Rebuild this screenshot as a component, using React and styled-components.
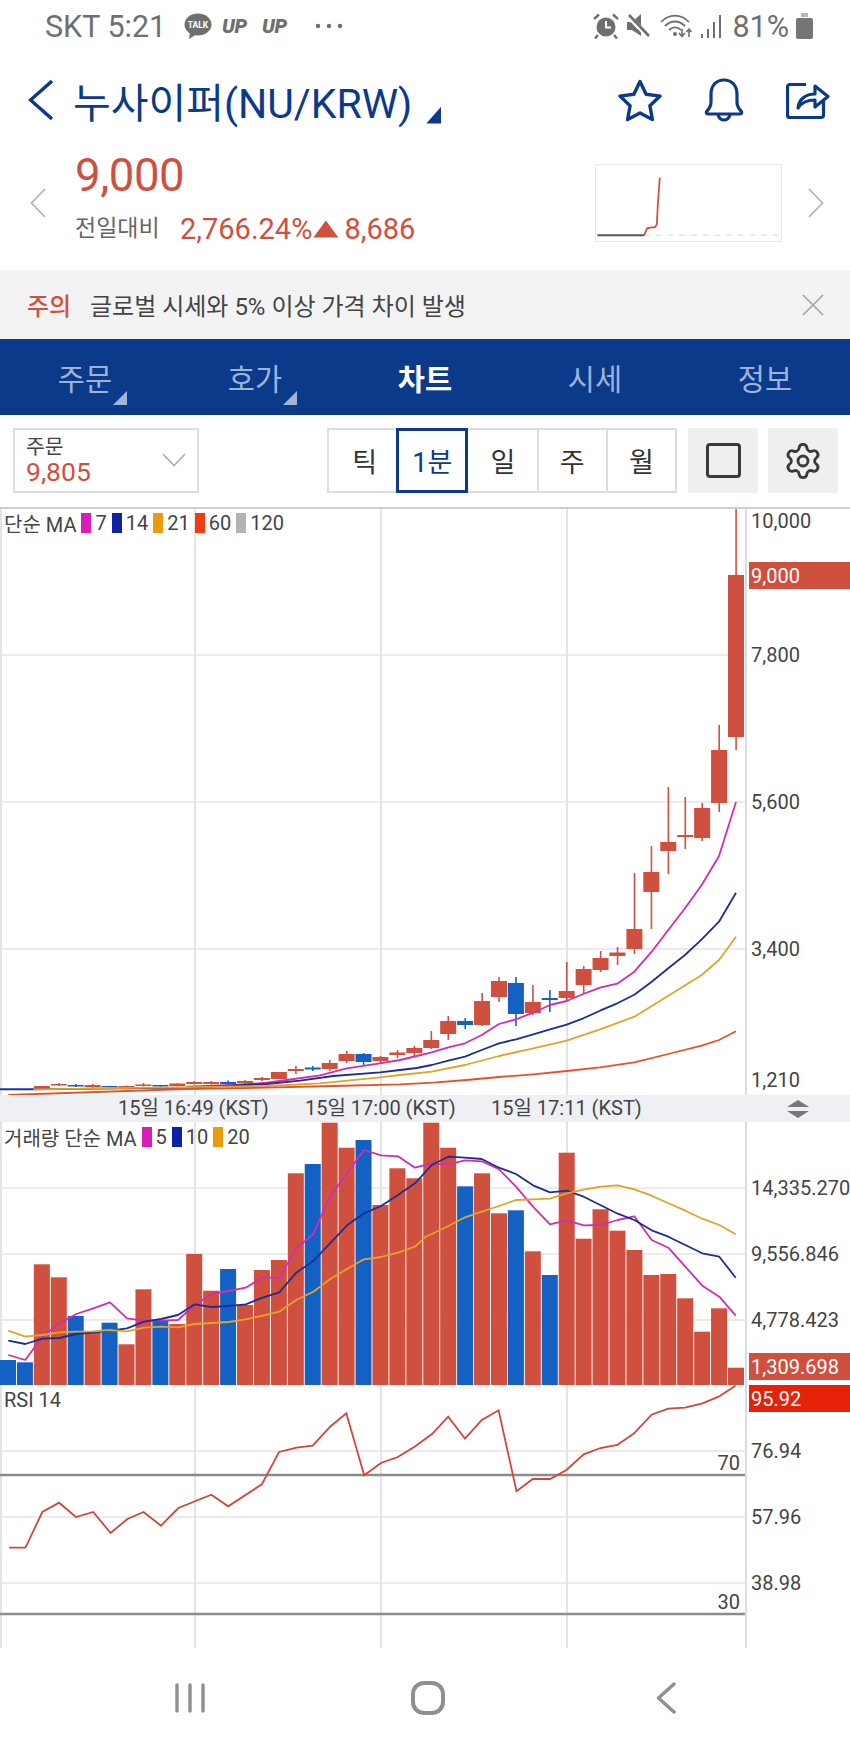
import React from 'react';
import styled, { createGlobalStyle } from 'styled-components';
import { Settings } from 'lucide-react';

const RED = '#d0503f';
const BLUE = '#1461c4';
const NAVY = '#0c3a8b';
const STEP = 16.93;

// chart series are kept at 3x resolution from an origin, so plain integers are enough
const scale3 = (ox, oy, list) => list.map(([x, y]) => [ox + x / 3, oy + y / 3]);
const toPoints = (list) => list.map(([x, y]) => `${x.toFixed(1)},${y.toFixed(1)}`).join(' ');

// i, body top, body bottom, wick top, wick bottom, falling
const CANDLES = [
  [2, 1086, 1089, 1086, 1089], [3, 1084, 1085.5, 1083, 1086], [4, 1085, 1086.5, 1084, 1087, 1],
  [5, 1085, 1087, 1084, 1087.5], [6, 1086, 1087, 1086, 1087.5, 1], [7, 1086, 1087, 1085.5, 1087.5],
  [8, 1084.5, 1086, 1083, 1086.5], [9, 1085, 1086.5, 1085, 1087, 1], [10, 1083.5, 1086, 1083, 1086.5],
  [11, 1082, 1084, 1081, 1084.5], [12, 1082, 1084, 1081, 1084.5], [13, 1082, 1084, 1080.5, 1084.5, 1],
  [14, 1081, 1083, 1080, 1084], [15, 1078, 1080, 1077, 1081], [16, 1072, 1079, 1072, 1079],
  [17, 1069, 1071, 1066, 1074], [18, 1067.5, 1069.5, 1066, 1071, 1], [19, 1063, 1069, 1060, 1071],
  [20, 1054, 1061, 1051, 1063], [21, 1054, 1062, 1053, 1065, 1], [22, 1057, 1061, 1056, 1063],
  [23, 1052.5, 1055, 1050, 1058], [24, 1048, 1053, 1046, 1057], [25, 1040, 1048, 1031, 1049],
  [26, 1021, 1034, 1016, 1040], [27, 1021, 1025, 1018, 1029, 1], [28, 1001, 1025, 993, 1026],
  [29, 981, 997, 977, 1002], [30, 983, 1014, 977, 1026, 1], [31, 1002, 1013, 985, 1015],
  [32, 998, 1000, 990, 1012, 1], [33, 991, 998, 962, 1000], [34, 969, 985, 966, 993],
  [35, 958, 970, 951, 972], [36, 952.5, 956, 947, 965], [37, 929, 949, 873, 954],
  [38, 872, 892, 846, 929], [39, 842, 851, 787, 874], [40, 835, 837, 797, 849],
  [41, 808, 838, 803, 841], [42, 750, 803, 725, 812], [43, 575, 737, 509, 750],
];

const PRICE_MA = [
  {
    color: '#d22cb4',
    points: [
      ...scale3(0, 960, [[560, 380], [700, 375], [800, 368], [860, 360], [960, 346], [1040, 325], [1140, 310]]),
      ...scale3(400, 820, [[0, 720], [50, 708], [95, 697], [145, 682], [195, 670], [245, 645], [297, 612], [348, 598], [400, 578], [450, 555], [500, 543], [550, 522], [600, 503], [652, 491], [703, 455], [755, 395], [805, 330], [855, 265], [905, 195], [957, 108], [1008, -54]]),
    ],
  },
  {
    color: '#1c2f90',
    points: [
      ...scale3(0, 960, [[0, 388], [100, 388], [560, 383], [800, 372], [900, 362], [1000, 348], [1140, 337]]),
      ...scale3(400, 820, [[0, 750], [50, 744], [95, 735], [145, 722], [195, 710], [245, 690], [297, 670], [348, 658], [400, 643], [450, 628], [500, 614], [550, 595], [600, 572], [652, 550], [703, 524], [755, 485], [805, 445], [855, 405], [905, 358], [957, 305], [1008, 218]]),
    ],
  },
  {
    color: '#e3a32a',
    points: [
      ...scale3(0, 960, [[100, 388], [800, 378], [960, 370], [1140, 352]]),
      ...scale3(400, 820, [[0, 765], [95, 755], [195, 735], [297, 708], [400, 685], [500, 662], [600, 628], [703, 590], [805, 527], [905, 465], [957, 420], [1008, 350]]),
    ],
  },
  {
    color: '#e9502a',
    points: [
      ...scale3(0, 960, [[25, 405], [560, 387], [800, 383], [1000, 378]]),
      ...scale3(400, 820, [[0, 793], [100, 788], [200, 780], [297, 771], [400, 763], [500, 753], [600, 742], [703, 727], [805, 702], [905, 677], [957, 660], [1008, 634]]),
    ],
  },
];

// top of each volume bar, and which ones fell
const VOLUME = [1360, 1362.3, 1264.3, 1277.3, 1316, 1331.7, 1322.7, 1344.3, 1289.3, 1321, 1324, 1254, 1290.7, 1269, 1305, 1270, 1260, 1173.3, 1164, 1122.7, 1147.7, 1140, 1205, 1168.3, 1178.3, 1122.7, 1147.7, 1186.3, 1173.3, 1213.3, 1210.3, 1251.3, 1275, 1152.7, 1238.7, 1209.3, 1230.7, 1250, 1275, 1274, 1298.3, 1331.7, 1308.3, 1367.7];
const VOLUME_DOWN = [0, 1, 4, 6, 9, 13, 18, 21, 27, 30, 32];

const VOLUME_MA = [
  {
    color: '#d22cb4',
    points: [
      ...scale3(0, 1120, [[25, 705], [76, 720], [127, 650], [178, 610], [229, 582], [280, 565], [330, 547], [381, 595], [432, 602], [483, 602], [534, 600], [584, 555], [635, 522], [686, 513], [737, 503], [788, 472], [838, 474], [889, 385], [940, 342], [990, 230], [1041, 160], [1092, 90], [1143, 106], [1194, 109], [1245, 143]]),
      ...scale3(425, 1120, [[20, 130], [70, 133], [120, 121], [170, 124], [222, 148], [273, 200], [324, 260], [375, 313], [425, 301], [476, 316], [527, 315], [578, 300], [628, 289], [680, 360], [730, 383], [781, 440], [832, 497], [883, 530], [932, 587]]),
    ],
  },
  {
    color: '#1c2f90',
    points: [
      ...scale3(0, 1120, [[25, 662], [76, 672], [127, 656], [178, 654], [229, 642], [280, 638], [330, 632], [381, 625], [432, 605], [483, 597], [534, 585], [584, 553], [635, 561], [686, 558], [737, 553], [788, 533], [838, 517], [889, 458], [940, 423], [990, 370], [1041, 316], [1092, 280], [1143, 258], [1194, 225], [1245, 190]]),
      ...scale3(425, 1120, [[20, 135], [70, 110], [120, 113], [170, 117], [222, 143], [273, 162], [324, 196], [375, 217], [425, 212], [476, 230], [527, 256], [578, 281], [628, 300], [680, 331], [730, 350], [781, 375], [832, 400], [883, 410], [932, 473]]),
    ],
  },
  {
    color: '#e3a32a',
    points: [
      ...scale3(0, 1120, [[25, 632], [76, 650], [127, 645], [178, 637], [229, 635], [280, 634], [330, 630], [381, 634], [432, 623], [483, 620], [534, 622], [584, 612], [635, 609], [686, 606], [737, 598], [788, 587], [838, 575], [889, 540], [940, 515], [990, 478], [1041, 447], [1092, 418], [1143, 411], [1194, 398], [1245, 380]]),
      ...scale3(425, 1120, [[0, 352], [70, 318], [120, 292], [170, 275], [222, 258], [273, 240], [324, 238], [375, 236], [425, 220], [476, 209], [527, 200], [578, 196], [628, 208], [680, 227], [730, 250], [781, 272], [832, 296], [883, 315], [932, 343]]),
    ],
  },
];

const RSI = [[17, 503], [47, 503], [78, 396], [109, 368], [140, 411], [172, 396], [204, 459], [235, 417], [265, 396], [297, 437], [329, 384], [390, 344], [421, 379], [483, 313], [515, 216], [547, 203], [577, 197], [609, 140], [639, 100], [672, 286], [703, 249], [734, 231], [765, 200], [797, 162], [827, 110], [858, 176], [889, 120], [920, 91], [953, 334], [983, 297], [1015, 297], [1045, 270], [1077, 223], [1108, 204], [1139, 195], [1170, 160], [1202, 104], [1233, 86], [1264, 83], [1296, 70], [1326, 50], [1357, 17]]
  .map(([x, y]) => [x / 1.845, 1380 + y / 3]);

const GlobalStyle = createGlobalStyle`
  html, body {
    margin: 0;
    padding: 0;
    background: #fff;
    font-family: Roboto, "Noto Sans CJK KR", sans-serif;
  }
  * { box-sizing: border-box; }
`;

const Page = styled.div`
  width: 850px;
  height: 1748px;
  display: flex;
  flex-direction: column;
  background: #fff;
  overflow: hidden;
`;

/* status bar */
const StatusBar = styled.div`
  height: 50px;
  padding: 2px 37px 0 45px;
  display: flex;
  align-items: center;
  justify-content: space-between;
  color: #6f6f6f;
  font-size: 30.5px;
`;

const StatusGroup = styled.div`
  display: flex;
  align-items: center;
`;

const Carrier = styled.span`
  width: 120px;
  margin-right: 19px;
  white-space: nowrap;
`;

const UpBadge = styled.span`
  width: 30px;
  margin-right: 10px;
  font-size: 20px;
  font-weight: 900;
  font-style: italic;
  line-height: 1;
  letter-spacing: -0.5px;
`;

const Battery = styled.span`
  margin-left: 7px;
`;

const StatusIcon = styled.svg`
  display: block;
  flex: none;
  margin-right: ${(p) => p.$gap || 0}px;
  margin-left: ${(p) => p.$lead || 0}px;
`;

/* title */
const TitleRow = styled.div`
  height: 100px;
  padding: 0 20px 0 28px;
  display: flex;
  align-items: center;
  color: ${NAVY};
`;

const Title = styled.h1`
  margin: 0 0 0 20px;
  font-size: 41px;
  font-weight: 400;
  white-space: nowrap;
`;

const TitleCaret = styled.span`
  width: 15px;
  height: 17px;
  margin: 30px 0 0 14px;
  background: ${NAVY};
  clip-path: polygon(100% 0, 100% 100%, 0 100%);
`;

const TitleActions = styled.div`
  margin-left: auto;
  display: flex;
  align-items: center;
  gap: 42px;
`;

/* price summary */
const PriceRow = styled.div`
  height: 120px;
  padding: 14px 26px 28px 30px;
  display: flex;
  align-items: center;
`;

const PriceInfo = styled.div`
  flex: 1;
  margin: -14px 0 0 29px;
  display: flex;
  flex-direction: column;
  align-self: flex-start;
`;

const Price = styled.div`
  color: ${RED};
  font-size: 45.5px;
  line-height: 52px;
  letter-spacing: -0.4px;
`;

const Change = styled.div`
  margin-top: 8px;
  display: flex;
  align-items: center;
  color: ${RED};
  font-size: 29px;
  line-height: 38px;
  white-space: nowrap;
`;

const ChangeLabel = styled.span`
  width: 105px;
  color: #666;
  font-size: 23px;
`;

const ChangeArrow = styled.span`
  width: 25px;
  height: 17px;
  margin: 0 6px 0 1px;
  background: ${RED};
  clip-path: polygon(50% 0, 100% 100%, 0 100%);
`;

const Spark = styled.svg`
  display: block;
  flex: none;
  margin-right: 26px;
  border: 1px solid #e8e8e8;
`;

/* warning strip */
const Notice = styled.div`
  height: 69px;
  padding: 0 26px 0 27px;
  display: flex;
  align-items: center;
  background: #f3f3f3;
  color: #444;
  font-size: 24px;
`;

const NoticeTag = styled.span`
  width: 63px;
  color: ${RED};
  font-weight: 500;
`;

const NoticeText = styled.span`
  flex: 1;
`;

/* section tabs */
const Tabs = styled.div`
  height: 76px;
  display: grid;
  grid-template-columns: repeat(5, 170px);
  background: ${NAVY};
`;

const Tab = styled.div`
  position: relative;
  display: flex;
  align-items: center;
  justify-content: center;
  color: ${(p) => (p.$active ? '#fff' : '#9db3da')};
  font-size: 29.5px;
  font-weight: ${(p) => (p.$active ? 700 : 400)};
`;

const TabCorner = styled.span`
  position: absolute;
  left: 113px;
  top: 52px;
  width: 14px;
  height: 14px;
  background: #a3b4d6;
  clip-path: polygon(100% 0, 100% 100%, 0 100%);
`;

/* chart toolbar */
const Toolbar = styled.div`
  height: 92px;
  padding: 13px 12px 14px 13px;
  display: flex;
  gap: 10px;
`;

const OrderSelect = styled.div`
  position: relative;
  width: 186px;
  margin-right: auto;
  padding: 5px 11px;
  border: 2px solid #dcdcdc;
  display: flex;
  flex-direction: column;
`;

const OrderLabel = styled.span`
  color: #444;
  font-size: 20.5px;
  line-height: 24px;
`;

const OrderPrice = styled.span`
  color: ${RED};
  font-size: 26.5px;
  line-height: 26px;
`;

const OrderCaret = styled.svg`
  position: absolute;
  right: 11px;
  top: 23px;
`;

const Segments = styled.div`
  width: 350px;
  margin-right: 1px;
  display: grid;
  grid-template-columns: repeat(5, 1fr);
  border: 2px solid #dcdcdc;
`;

const Segment = styled.div`
  display: flex;
  align-items: center;
  justify-content: center;
  margin: ${(p) => (p.$active ? '-2px -1px -2px -2px' : '0')};
  border-left: 2px solid ${(p) => (p.$first ? 'transparent' : '#dcdcdc')};
  border: ${(p) => (p.$active ? `3px solid ${NAVY}` : undefined)};
  color: ${(p) => (p.$active ? NAVY : '#333')};
  font-size: 27px;
`;

const ToolButton = styled.div`
  width: 70px;
  display: flex;
  align-items: center;
  justify-content: center;
  background: #efefef;
  color: #3a3a3a;
`;

const SquareGlyph = styled.span`
  width: 35px;
  height: 35px;
  border: 3px solid #3a3a3a;
  border-radius: 4px;
`;

/* chart panels */
const Panel = styled.div`
  position: relative;
  height: ${(p) => p.$h}px;
  display: flex;
`;

const PricePanel = styled(Panel)`
  border-top: 2px solid #cfcfcf;
`;

const Plot = styled.svg`
  display: block;
  flex: none;
  width: 745px;
  height: 100%;
`;

const Axis = styled.div`
  position: relative;
  flex: 1;
  border-left: 2px solid #dcdcdc;
`;

const AxisLabel = styled.span`
  position: absolute;
  left: 4px;
  top: ${(p) => p.$y}px;
  transform: translateY(-50%);
  color: #444;
  font-size: 20px;
  white-space: nowrap;
`;

const AxisTag = styled.span`
  position: absolute;
  left: 2px;
  right: 0;
  top: ${(p) => p.$y}px;
  height: 27px;
  padding-left: 2px;
  display: flex;
  align-items: center;
  background: ${(p) => p.$bg};
  color: #fff;
  font-size: 20px;
`;

const Legend = styled.div`
  position: absolute;
  left: 4px;
  top: ${(p) => p.$top}px;
  height: 20px;
  display: flex;
  align-items: center;
  gap: 4px;
  color: #444;
  font-size: 20px;
  white-space: nowrap;
`;

const Swatch = styled.i`
  width: 10px;
  height: 20px;
  margin-left: 1px;
  background: ${(p) => p.$color};
`;

const LevelLabel = styled.span`
  position: absolute;
  right: 110px;
  top: ${(p) => p.$y}px;
  transform: translateY(-50%);
  color: #444;
  font-size: 20px;
`;

const TimeBar = styled.div`
  position: relative;
  height: 27px;
  background: #eef0f4;
  color: #444;
  font-size: 20px;
`;

const TimeLabel = styled.span`
  position: absolute;
  left: ${(p) => p.$x}px;
  top: 0;
  line-height: 27px;
  white-space: nowrap;
`;

const ResizeHandle = styled.svg`
  position: absolute;
  left: 787px;
  top: 5px;
`;

/* android navigation */
const NavBar = styled.div`
  flex: 1;
  padding: 0 71px;
  display: grid;
  grid-template-columns: repeat(3, 238px);
  align-items: center;
  justify-items: center;
`;

const GridLines = ({ rows, top, height }) => (
  <g stroke="#e4e4e4" strokeWidth="1.5">
    {[1, 195, 381, 567].map((x) => (
      <line key={x} x1={x} x2={x} y1={top} y2={top + height} strokeWidth="2" />
    ))}
    {rows.map((y) => (
      <line key={y} x1="0" x2="745" y1={y} y2={y} />
    ))}
  </g>
);

const Series = ({ items, width = 1.8 }) =>
  items.map((s) => (
    <polyline key={s.color} points={toPoints(s.points)} fill="none" stroke={s.color} strokeWidth={width} strokeLinejoin="round" />
  ));

function PricePlot() {
  return (
    <Plot viewBox="0 509 745 586">
      <GridLines rows={[655, 802, 949]} top={509} height={586} />
      <line x1="0" x2="34" y1="1089.3" y2="1089.3" stroke={BLUE} strokeWidth="1.5" />
      {CANDLES.map(([i, top, bottom, high, low, down]) => {
        const x = i * STEP;
        const color = down ? BLUE : RED;
        return (
          <g key={i} fill={color}>
            <rect x={x + 7.3} y={high} width="1.6" height={low - high} />
            <rect x={x} y={top} width="16" height={bottom - top} />
          </g>
        );
      })}
      <Series items={PRICE_MA} />
    </Plot>
  );
}

function VolumePlot() {
  return (
    <Plot viewBox="0 1122 745 263">
      <GridLines rows={[1188, 1254, 1320]} top={1122} height={263} />
      {VOLUME.map((top, i) => (
        <rect key={i} x={i * STEP} y={top} width="16" height={1385 - top} fill={VOLUME_DOWN.includes(i) ? BLUE : RED} />
      ))}
      <Series items={VOLUME_MA} />
    </Plot>
  );
}

function RsiPlot() {
  return (
    <Plot viewBox="0 1385 745 263">
      <GridLines rows={[1451, 1517, 1583]} top={1385} height={263} />
      <line x1="0" x2="745" y1="1475" y2="1475" stroke="#8c8c8c" strokeWidth="2.5" />
      <line x1="0" x2="745" y1="1614" y2="1614" stroke="#8c8c8c" strokeWidth="2.5" />
      <polyline points={toPoints(RSI)} fill="none" stroke="#d2463a" strokeWidth="1.8" />
    </Plot>
  );
}

const TABS = ['주문', '호가', '차트', '시세', '정보'];
const RANGES = ['틱', '1분', '일', '주', '월'];

export default function App() {
  return (
    <Page>
      <GlobalStyle />
      <StatusBar>
        <StatusGroup>
          <Carrier>SKT 5:21</Carrier>
          <StatusIcon width="28" height="26" viewBox="0 0 28 26" $gap={10}>
            <ellipse cx="14" cy="11.5" rx="13.5" ry="11" fill="#6f6f6f" />
            <path d="M6 18l-1 8 8-5z" fill="#6f6f6f" />
            <text x="14" y="14.5" textAnchor="middle" fontSize="8.5" fontWeight="700" fill="#fff">TALK</text>
          </StatusIcon>
          <UpBadge>UP</UpBadge>
          <UpBadge>UP</UpBadge>
          <StatusIcon width="28" height="6" viewBox="0 0 28 6" $lead={13}>
            <circle cx="3" cy="3" r="2.2" fill="#6f6f6f" />
            <circle cx="14" cy="3" r="2.2" fill="#6f6f6f" />
            <circle cx="25" cy="3" r="2.2" fill="#6f6f6f" />
          </StatusIcon>
        </StatusGroup>
        <StatusGroup>
          <StatusIcon width="26" height="26" viewBox="0 0 26 26" $gap={7}>
            <circle cx="13" cy="14" r="9.5" fill="#6f6f6f" />
            <path d="M13 8v6.5h5" fill="none" stroke="#fff" strokeWidth="2" />
            <path d="M1 6l5-4.5M25 6l-5-4.5M5 22l-3 3.5M21 22l3 3.5" stroke="#6f6f6f" strokeWidth="2.4" />
          </StatusIcon>
          <StatusIcon width="24" height="26" viewBox="0 0 24 26" $gap={10}>
            <path d="M1 9h5l9-8v22l-9-6H1z" fill="#6f6f6f" />
            <path d="M2 3l21 21" stroke="#fff" strokeWidth="5" />
            <path d="M3 2l20 21" stroke="#6f6f6f" strokeWidth="2.6" />
          </StatusIcon>
          <StatusIcon width="33" height="24" viewBox="0 0 33 24" $gap={7}>
            <g fill="none" stroke="#6f6f6f" strokeWidth="1.8">
              <path d="M1 8c8-8.500 20-8.500 28 0" />
              <path d="M5 12c6-6 14-6 20 0" />
              <path d="M9 16c4-3.500 8-3.500 12 0" />
            </g>
            <circle cx="15" cy="20" r="2" fill="#6f6f6f" />
            <path d="M22 15v7m-3-3l3 3.500 3-3.500M29 23v-8m-2.500 3l2.500-3 2.500 3" fill="none" stroke="#6f6f6f" strokeWidth="1.6" />
          </StatusIcon>
          <StatusIcon width="22" height="24" viewBox="0 0 22 24" $gap={10}>
            <path d="M1 20h2v4H1zM7 15h2v9H7zM13 8h2v16h-2zM19 1h2v23h-2z" fill="#6f6f6f" />
          </StatusIcon>
          <span>81%</span>
          <Battery>
            <StatusIcon width="17" height="26" viewBox="0 0 17 26">
              <path d="M5 0h7v4H5z" fill="#b5b5b5" />
              <rect x="0" y="5" width="17" height="21" rx="2" fill="#757575" />
            </StatusIcon>
          </Battery>
        </StatusGroup>
      </StatusBar>

      <TitleRow>
        <svg width="25" height="42" viewBox="0 0 25 42" fill="none" stroke={NAVY} strokeWidth="3.4">
          <path d="M24 2L2.500 21 24 40" />
        </svg>
        <Title>누사이퍼(NU/KRW)</Title>
        <TitleCaret />
        <TitleActions>
          <svg width="44" height="43" viewBox="0 0 44 43" fill="none" stroke={NAVY} strokeWidth="3.400" strokeLinejoin="round">
            <path d="M22 2.500l6.100 12.700 14 1.900-10.200 9.700 2.500 13.800L22 34l-12.400 6.600 2.500-13.800L1.900 17.100l14-1.900z" />
          </svg>
          <svg width="40" height="44" viewBox="0 0 40 44" fill="none" stroke={NAVY} strokeWidth="3.200" strokeLinejoin="round">
            <path d="M20 2C12 2 7 8 7 16v8c0 4-2 7-4 9-1 1-1 3 1 3h32c2 0 2-2 1-3-2-2-4-5-4-9v-8C33 8 28 2 20 2z" />
            <path d="M14 37c1 3 3 5 6 5s5-2 6-5" />
          </svg>
          <svg width="44" height="42" viewBox="0 0 44 42" fill="none" stroke={NAVY} strokeWidth="3.200" strokeLinejoin="round">
            <path d="M20 5.500H4A2.500 2.500 0 0 0 1.500 8v28A2.500 2.500 0 0 0 4 38.500h31a2.500 2.500 0 0 0 2.500-2.500V22" />
            <path d="M12 29c1-9 8-14 17-14V7l13 10.500L29 28v-7c-7 0-13 2-17 8z" />
          </svg>
        </TitleActions>
      </TitleRow>

      <PriceRow>
        <svg width="16" height="30" viewBox="0 0 16 30" fill="none" stroke="#b5b5b5" strokeWidth="1.800">
          <path d="M15 1L1.500 15 15 29" />
        </svg>
        <PriceInfo>
          <Price>9,000</Price>
          <Change>
            <ChangeLabel>전일대비</ChangeLabel>
            <span>2,766.24%</span>
            <ChangeArrow />
            <span>8,686</span>
          </Change>
        </PriceInfo>
        <Spark width="187" height="78" viewBox="596 164 187 78">
          <line x1="644" x2="782" y1="236" y2="236" stroke="#e6e6e6" strokeWidth="1.500" strokeDasharray="6 6" />
          <line x1="596" x2="644" y1="236" y2="236" stroke="#555" strokeWidth="2" />
          <polyline points="644,236 647,229 652,228 655,228 657,225 658,205 660,177" fill="none" stroke={RED} strokeWidth="1.800" />
        </Spark>
        <svg width="16" height="30" viewBox="0 0 16 30" fill="none" stroke="#b5b5b5" strokeWidth="1.800">
          <path d="M1 1l13.500 14L1 29" />
        </svg>
      </PriceRow>

      <Notice>
        <NoticeTag>주의</NoticeTag>
        <NoticeText>글로벌 시세와 5% 이상 가격 차이 발생</NoticeText>
        <svg width="22" height="22" viewBox="0 0 22 22" stroke="#a3a3a3" strokeWidth="1.600">
          <path d="M1 1l20 20M21 1L1 21" />
        </svg>
      </Notice>

      <Tabs>
        {TABS.map((t, i) => (
          <Tab key={t} $active={i === 2}>
            {t}
            {i < 2 && <TabCorner />}
          </Tab>
        ))}
      </Tabs>

      <Toolbar>
        <OrderSelect>
          <OrderLabel>주문</OrderLabel>
          <OrderPrice>9,805</OrderPrice>
          <OrderCaret width="24" height="14" viewBox="0 0 24 14" fill="none" stroke="#adadad" strokeWidth="1.600">
            <path d="M1 1l11 11.500L23 1" />
          </OrderCaret>
        </OrderSelect>
        <Segments>
          {RANGES.map((r, i) => (
            <Segment key={r} $active={i === 1} $first={i === 0 || i === 2}>{r}</Segment>
          ))}
        </Segments>
        <ToolButton><SquareGlyph /></ToolButton>
        <ToolButton><Settings size={40} strokeWidth={1.700} /></ToolButton>
      </Toolbar>

      <PricePanel $h={588}>
        <PricePlot />
        <Legend $top={4}>
          단순 MA
          <Swatch $color="#d91db8" />7
          <Swatch $color="#0d22a8" />14
          <Swatch $color="#e89c0c" />21
          <Swatch $color="#f23c10" />60
          <Swatch $color="#b3b3b3" />120
        </Legend>
        <Axis>
          <AxisLabel $y={12}>10,000</AxisLabel>
          <AxisTag $y={53} $bg={RED}>9,000</AxisTag>
          <AxisLabel $y={146}>7,800</AxisLabel>
          <AxisLabel $y={293}>5,600</AxisLabel>
          <AxisLabel $y={440}>3,400</AxisLabel>
          <AxisLabel $y={571}>1,210</AxisLabel>
        </Axis>
      </PricePanel>

      <TimeBar>
        <TimeLabel $x={118}>15일 16:49 (KST)</TimeLabel>
        <TimeLabel $x={305}>15일 17:00 (KST)</TimeLabel>
        <TimeLabel $x={491}>15일 17:11 (KST)</TimeLabel>
        <ResizeHandle width="22" height="18" viewBox="0 0 22 18" fill="#777">
          <path d="M11 0l11 7H0zM0 11h22l-11 7z" />
        </ResizeHandle>
      </TimeBar>

      <Panel $h={263}>
        <VolumePlot />
        <Legend $top={5}>
          거래량 단순 MA
          <Swatch $color="#d91db8" />5
          <Swatch $color="#0d22a8" />10
          <Swatch $color="#e89c0c" />20
        </Legend>
        <Axis>
          <AxisLabel $y={66}>14,335.270</AxisLabel>
          <AxisLabel $y={132}>9,556.846</AxisLabel>
          <AxisLabel $y={198}>4,778.423</AxisLabel>
          <AxisTag $y={231} $bg={RED}>1,309.698</AxisTag>
        </Axis>
      </Panel>

      <Panel $h={263}>
        <RsiPlot />
        <Legend $top={5}>RSI 14</Legend>
        <LevelLabel $y={78}>70</LevelLabel>
        <LevelLabel $y={217}>30</LevelLabel>
        <Axis>
          <AxisTag $y={0} $bg="#e52207">95.92</AxisTag>
          <AxisLabel $y={66}>76.94</AxisLabel>
          <AxisLabel $y={132}>57.96</AxisLabel>
          <AxisLabel $y={198}>38.98</AxisLabel>
        </Axis>
      </Panel>

      <NavBar>
        <svg width="30" height="30" viewBox="0 0 30 30" stroke="#8f8f8f" strokeWidth="3.400" strokeLinecap="round">
          <path d="M2 2v26M15 2v26M28 2v26" />
        </svg>
        <svg width="34" height="34" viewBox="0 0 34 34" fill="none" stroke="#8f8f8f" strokeWidth="4">
          <rect x="2" y="2" width="30" height="30" rx="11" />
        </svg>
        <svg width="20" height="32" viewBox="0 0 20 32" fill="none" stroke="#8f8f8f" strokeWidth="3.400" strokeLinecap="round" strokeLinejoin="round">
          <path d="M18 2L2.500 16 18 30" />
        </svg>
      </NavBar>
    </Page>
  );
}
